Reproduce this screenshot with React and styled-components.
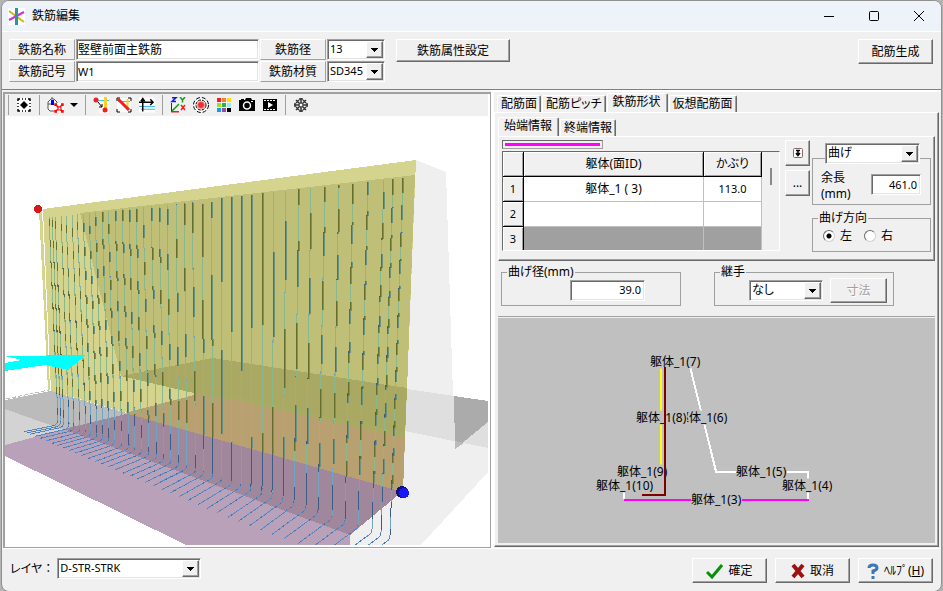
import React, { useState } from 'react';
import styled, { createGlobalStyle, css } from 'styled-components';

const GlobalStyle = createGlobalStyle`
  * {
    box-sizing: border-box;
  }

  body {
    margin: 0;
    background: #b4b4b4;
  }

  body, button, input, select {
    font-family: "Noto Sans", "Noto Sans CJK JP", sans-serif;
    font-feature-settings: "palt";
    font-size: 12px;
    line-height: 16px;
    color: #000;
  }
`;

/* bevels */

const raised = css`
  border: 1px solid;
  border-color: #fff #696969 #696969 #fff;
  box-shadow: inset -1px -1px #a0a0a0;
`;

const sunken = css`
  border: 1px solid;
  border-color: #a0a0a0 #fff #fff #a0a0a0;
  box-shadow: inset 1px 1px #696969, inset -1px -1px #e3e3e3;
`;

/* window frame */

const Window = styled.div`
  display: flex;
  flex-direction: column;
  min-height: calc(100vh - 1px);
  margin: 0 1px 1px;
  background: #f0f0f0;
  border: 1px solid #909090;
  border-radius: 8px;
  overflow: hidden;
`;

const TitleBar = styled.header`
  display: flex;
  align-items: center;
  height: 31px;
  padding-left: 6px;
  background: #eef3f9;
  border-bottom: 1px solid #fff;
`;

const Title = styled.h1`
  flex: 1;
  margin: 0 0 0 7px;
  font-size: 12px;
  font-weight: 400;
`;

const CaptionButton = styled.button`
  display: flex;
  align-items: center;
  justify-content: center;
  width: 45px;
  height: 30px;
  padding: 0;
  border: 0;
  background: none;
`;

const Header = styled.div`
  display: flex;
  align-items: flex-start;
  padding: 7px 8px 7px 7px;
  border-bottom: 1px solid #808080;
`;

const Fields = styled.div`
  display: grid;
  grid-template-columns: 66px 183px 66px 58px;
  grid-auto-rows: 21px;
  gap: 1px;
`;

const FieldLabel = styled.label`
  display: flex;
  align-items: center;
  justify-content: center;
  border: 1px solid;
  border-color: #fff #a0a0a0 #a0a0a0 #fff;
`;

const TextBox = styled.input`
  width: ${props => props.$width || '100%'};
  height: 21px;
  min-width: 0;
  padding: 0 3px 1px 1px;
  background: #fff;
  font-size: ${props => props.$latin ? '11px' : '12px'};
  text-align: ${props => props.$align || 'left'};
  outline: none;
  ${sunken}
`;

const SelectFrame = styled.span`
  display: inline-grid;
  width: ${props => props.$width || '100%'};
  height: 21px;
  vertical-align: top;
`;

const NativeSelect = styled.select`
  grid-area: 1 / 1;
  width: 100%;
  min-width: 0;
  padding: 0 18px 1px 2px;
  appearance: none;
  background: #fff;
  border-radius: 0;
  font-size: ${props => props.$latin ? '11px' : '12px'};
  outline: none;
  ${sunken}
`;

const SelectArrow = styled.span`
  display: flex;
  align-items: center;
  justify-content: center;
  grid-area: 1 / 1;
  justify-self: end;
  width: 17px;
  margin: 2px;
  background: #f0f0f0;
  pointer-events: none;
  ${raised}
`;

const Button = styled.button`
  display: flex;
  align-items: center;
  justify-content: center;
  gap: 5px;
  width: ${props => props.$width || '75px'};
  height: ${props => props.$height || '25px'};
  padding: 0;
  background: #f0f0f0;
  white-space: nowrap;
  ${raised}

  &:disabled {
    color: #a0a0a0;
    text-shadow: 1px 1px #fff;
  }
`;

const AttributeButton = styled(Button)`
  margin: 0 auto 0 11px;
`;

const Body = styled.main`
  display: flex;
  flex: 1;
`;

/* 3D view */

const ViewPane = styled.section`
  display: flex;
  flex: 1;
  flex-direction: column;
  min-width: 0;
  margin: 2px 0 0 1px;
  padding: 0 2px 2px 0;
  background: #fff;
  border: solid #a0a0a0;
  border-width: 2px 1px 1px 2px;
`;

const Toolbar = styled.div`
  display: flex;
  align-items: center;
  gap: 7px;
  height: 22px;
  padding-left: 3px;
  background: #f0f0f0;
`;

const Separator = styled.span`
  width: 1px;
  height: 20px;
  background: #a0a0a0;
`;

const ToolButton = styled.button`
  display: flex;
  align-items: center;
  width: ${props => props.$width || '16px'};
  height: 18px;
  padding: 0;
  border: 0;
  background: none;
`;

const Scene = styled.svg`
  display: block;
  flex: 1;
  width: 100%;
  min-height: 0;
`;

/* right side */

const SettingsPane = styled.section`
  display: flex;
  flex-direction: column;
  width: 450px;
  padding: 1px 2px 1px 0;
  border: solid #fff;
  border-width: 2px 0 0 3px;
`;

const Tabs = styled.div`
  display: flex;
  align-items: flex-end;
  height: 19px;
  padding-left: ${props => props.$inset || '0'};
`;

const Tab = styled.button`
  height: ${props => props.$active ? '20px' : '17px'};
  margin-right: 1px;
  margin-bottom: ${props => props.$active ? '-1px' : '0'};
  padding: ${props => props.$active ? '0 6px 3px 5px' : '0 3px'};
  background: #f0f0f0;
  border: 1px solid;
  border-color: #fff #696969 transparent #fff;
  border-bottom: 0;
  border-radius: 2px 2px 0 0;
  box-shadow: inset -1px 0 #a0a0a0;
  line-height: 16px;
  white-space: nowrap;
`;

const TabPanel = styled.div`
  display: flex;
  flex: 1;
  flex-direction: column;
  padding: 4px 3px 3px;
  ${raised}
`;

const EdgePanel = styled.div`
  display: flex;
  align-items: flex-start;
  padding: 3px 3px 8px;
  ${raised}
`;

const FaceColumn = styled.div`
  flex: 1;
  min-width: 0;
`;

const ColorBar = styled.div`
  width: 101px;
  height: 9px;
  margin-bottom: 2px;
  padding: 2px;
  border: 1px solid;
  border-color: #696969 #a0a0a0 #a0a0a0 #696969;

  &::after {
    content: '';
    display: block;
    height: 3px;
    background: #ff00ff;
  }
`;

const GridFrame = styled.div`
  display: flex;
  height: 100px;
  overflow: hidden;
  border: 1px solid;
  border-color: #696969 #fff #fff #696969;
`;

const FaceTable = styled.table`
  flex: 1;
  height: 99px;
  border-collapse: separate;
  border-spacing: 0;
  table-layout: fixed;
  background: #fff;

  th, td {
    height: 25px;
    padding: 0;
    font-weight: 400;
    text-align: center;
    border-right: 1px solid #c0c0c0;
    border-bottom: 1px solid #c0c0c0;
  }

  th {
    background: #f0f0f0;
    border-color: #000;
    box-shadow: inset 1px 1px #fff, inset -1px -1px #a0a0a0;
  }

  tbody th {
    font-size: 11px;
  }
`;

const Cell = styled.td`
  background: ${props => props.$unused ? '#a0a0a0' : '#fff'};
  font-size: ${props => props.$latin ? '11px' : '12px'};
`;

const ScrollTrack = styled.div`
  width: 17px;
  padding: 16px 0 0 8px;

  &::before {
    content: '';
    display: block;
    width: 2px;
    height: 17px;
    background: #8a8a8a;
  }
`;

const SideButtons = styled.div`
  display: flex;
  flex-direction: column;
  gap: 4px;
  margin: 0 2px 0 5px;
`;

const Groups = styled.div`
  width: 119px;
  padding-top: 3px;
`;

const Group = styled.fieldset`
  min-width: 0;
  width: ${props => props.$width || '100%'};
  margin: 0;
  padding: 0;
  border: 1px solid #a0a0a0;
`;

const Legend = styled.legend`
  margin-left: 5px;
  padding: 0 1px;
  line-height: 12px;
`;

const SelectLegend = styled.legend`
  margin-left: 12px;
  padding: 0 0 10px;
`;

const LengthRow = styled.div`
  display: flex;
  align-items: flex-start;
  justify-content: space-between;
  height: 30px;
  padding: 0 9px 0 8px;
`;

const LengthLabel = styled.label`
  display: flex;
  flex-direction: column;
  align-items: flex-start;
  margin-top: -4px;
`;

const DirectionGroup = styled(Group)`
  margin-top: 7px;
`;

const RadioRow = styled.div`
  display: flex;
  align-items: center;
  gap: 12px;
  height: 27px;
  padding: 0 0 3px 10px;
`;

const RadioLabel = styled.label`
  display: flex;
  align-items: center;
  gap: 5px;
`;

const Radio = styled.input`
  width: 12px;
  height: 12px;
  margin: 0;
  appearance: none;
  background: #fff;
  border: 1px solid;
  border-color: #696969 #d0d0d0 #d0d0d0 #696969;
  border-radius: 50%;

  &:checked {
    background: radial-gradient(circle, #000 2px, #fff 3px);
  }
`;

const BendRow = styled.div`
  display: flex;
  justify-content: flex-start;
  gap: 33px;
  padding: 5px 3px 10px;
  border-bottom: 1px solid #a0a0a0;
`;

const BendControls = styled.div`
  display: flex;
  align-items: center;
  justify-content: ${props => props.$spread ? 'space-between' : 'flex-end'};
  height: 27px;
  padding: ${props => props.$spread ? '0 6px 2px 34px' : '0 35px 3px 0'};
`;

const Diagram = styled.svg`
  display: block;
  flex: 1;
  width: 100%;
  min-height: 0;
  margin-top: 1px;
  background: #c0c0c0;
`;

/* bottom */

const Footer = styled.footer`
  display: flex;
  align-items: flex-start;
  gap: 8px;
  padding: 9px 8px 8px;
  border-top: 1px solid #fff;
`;

const LayerLabel = styled.label`
  display: flex;
  align-items: center;
  gap: 3px;
  margin-right: auto;
  white-space: pre;
`;

const Select = ({ id, label, options, width, latin }) => (
    <SelectFrame $width={width}>
        <NativeSelect id={id} aria-label={label} $latin={latin}>
            {options.map(option => <option key={option}>{option}</option>)}
        </NativeSelect>
        <SelectArrow>
            <svg width="7" height="4" shapeRendering="crispEdges"><path d="M0 0h7L3.5 4z" /></svg>
        </SelectArrow>
    </SelectFrame>
);

/* icons */

const Icon = ({ children, width = 16 }) => (
    <svg width={width} height="16" viewBox={`0 0 ${width} 16`} fill="none" stroke="#000" aria-hidden="true">{children}</svg>
);

const AppIcon = () => (
    <svg width="17" height="17" viewBox="0 0 17 17" strokeWidth="2" aria-hidden="true">
        <path fill="#fff" d="M0 0h17v17H0z" />
        <path stroke="#c8b820" d="M1 3l15 11" />
        <path stroke="#d030d8" d="M1 12L16 4" />
        <path stroke="#289898" strokeWidth="3" d="M8.500 0v17" />
    </svg>
);

const FitIcon = () => (
    <Icon>
        <path fill="#fff" stroke="none" d="M1 1h14v14H1z" />
        <path strokeWidth="1.500" d="M2 4V2h2M6 2h1M9 2h1M12 2h2v2M14 6v1M14 9v1M14 12v2h-2M10 14H9M7 14H6M4 14H2v-2M2 10V9M2 7V6" />
        <circle cx="8" cy="8" r="2.500" fill="#000" />
        <path d="M8 4v8M4 8h8" />
    </Icon>
);

const MouseIcon = () => (
    <Icon width={17}>
        <path fill="#fff" stroke="#555" d="M1 5l3-3h3l3 3v7l-2 2H3l-2-2z" />
        <path stroke="#555" d="M1 7h9M5 2V0" />
        <path stroke="#0000ff" strokeWidth="3" d="M5.500 3v5" />
        <path fill="#fff" stroke="none" d="M7 6h10v10H7z" />
        <path stroke="#f00" strokeWidth="1.500" d="M8 9V7h2M14 7h2v2M16 13v2h-2M10 15H8v-2M9 8l6 6M15 8l-6 6" />
        <path fill="#fff" stroke="#f00" d="M11 10h3v3h-3z" />
    </Icon>
);

const MoveEdgeIcon = () => (
    <Icon>
        <path fill="#fff" stroke="none" d="M6 0h10v16H6z" />
        <path stroke="#28c8f0" d="M4 3.500h12" />
        <path stroke="#ffd020" strokeWidth="3" d="M12.500 0v13" />
        <path d="M5 5l4 5M9 7v3H6" />
        <circle cx="3" cy="3" r="2.500" fill="#f02020" stroke="none" />
        <circle cx="12" cy="13" r="2.500" fill="#f02020" stroke="none" />
    </Icon>
);

const CutEdgeIcon = () => (
    <Icon>
        <path fill="#fff" stroke="none" d="M1 1h14v14H1z" />
        <path d="M1 4V1h3M12 1h3v3M15 12v3h-3M4 15H1v-3" />
        <path stroke="#28c8f0" d="M2 4.500h12" />
        <path stroke="#ffd020" strokeWidth="2" d="M11.500 2v11" />
        <path stroke="#f02020" strokeWidth="3" d="M2 2l11 11" />
    </Icon>
);

const AxisRangeIcon = () => (
    <Icon width={17}>
        <path fill="#fff" stroke="none" d="M0 0h17v16H0z" />
        <path stroke="#28b0e8" d="M0 9.500h17M2 12.500h15" />
        <path strokeWidth="1.500" d="M4 15V2M2 4l2-3 2 3M0 5h15M12 2l3 3-3 3" />
    </Icon>
);

const AxesIcon = () => (
    <Icon>
        <path stroke="#1818e0" strokeWidth="1.500" d="M2 .700h4L2 4.500h4" />
        <path stroke="#10a010" strokeWidth="1.500" d="M10 0l2.500 3M15 0l-2.500 3v2.500M2 14l7-7" />
        <path stroke="#1818e0" d="M1.500 6v9" />
        <path stroke="#f02020" strokeWidth="1.500" d="M11 8l4 5M15 8l-4 5M1 14.800h8" />
    </Icon>
);

const TargetIcon = () => (
    <Icon>
        <circle cx="8" cy="8" r="7.500" fill="#fff" strokeDasharray="4 2" />
        <circle cx="8" cy="8" r="5" strokeDasharray="3 1" />
        <circle cx="8" cy="8" r="3.500" fill="#f03030" stroke="#ff9090" />
    </Icon>
);

const PALETTE = ['#f02028', '#f88020', '#ffe000', '#a8e020', '#20b850', '#a0e8f0', '#10a0e8', '#a048a8', '#000'];

const PaletteIcon = () => (
    <Icon>
        {PALETTE.map((color, i) => (
            <rect key={color} x={1 + (i % 3) * 5} y={1 + Math.floor(i / 3) * 5} width="4" height="4" fill={color} stroke="none" />
        ))}
    </Icon>
);

const CameraIcon = () => (
    <Icon>
        <path fill="#000" stroke="none" d="M0 3h2V2h3v1h1l1-2h5l1 2h3v11H0z" />
        <circle cx="8" cy="8.500" r="3.500" stroke="#fff" strokeWidth="1.500" />
        <path stroke="#fff" d="M12 4.500h2" />
    </Icon>
);

const MovieIcon = () => (
    <Icon>
        <path fill="#000" stroke="none" d="M1 2h14v12H1z" />
        <path stroke="#fff" strokeDasharray="2 1" d="M2 3.500h12M2 12.500h12" />
        <path fill="#fff" stroke="none" d="M6 5l5 3-5 3z" />
    </Icon>
);

const SnowIcon = () => (
    <Icon>
        <path stroke="#333" strokeWidth="1.500" d="M8 1v14M1 8h14M3 3l10 10M13 3L3 13M6 2h4M6 14h4M2 6v4M14 6v4M3 6l3-3M10 3l3 3M3 10l3 3M10 13l3-3" />
        <circle cx="8" cy="8" r="2" fill="#fff" stroke="#333" />
    </Icon>
);

/* reinforcing bars: x at the top, x at the bend, dash period, first dash */

const BARS = [
    [49, 58, 21, 2], [52, 61, 21, 3], [55, 64, 21, 5], [61, 69, 22, 8], [66, 74, 22, 10], [72, 80, 23, 14],
    [77, 86, 23, 8], [83, 91, 24, 10], [89, 97, 25, 13], [95, 103, 26, 5], [102, 109, 27, 1], [108, 115, 28, 14],
    [115, 122, 30, 1], [122, 129, 32, 1], [129, 135, 34, 2], [136, 142, 36, 2], [143, 149, 37, 18], [151, 157, 39, 2],
    [159, 164, 41, 3], [167, 171, 45, 5], [176, 179, 54, 36], [184, 187, 66, 0], [192, 196, 84, 2], [202, 204, 96, 4],
    [211, 213, 128, 76], [221, 222, 152, 0], [231, 232, 245, 0], [241, 241, 500, 400], [252, 251, 242, 0],
    [263, 262, 240, 0], [274, 272, 155, 60], [286, 283, 108, 30], [299, 294, 82, -30], [311, 306, 65, 25],
    [325, 318, 54, -14], [339, 332, 46, -22], [353, 345, 40, -2], [368, 358, 35, -6], [384, 372, 31, 12],
    [393, 381, 28, 0], [403, 390, 27, 0],
].map(([top, bend, period, shift]) => {
    const y1 = 217 - (top - 49) * 0.11;
    const y2 = 424 + (bend - 59) * 0.35;
    const edge = 391 + (bend - 51) * 0.287;
    const edgeX = top + (bend - top) * (edge - y1) / (y2 - y1);
    const drop = 8 + Math.min(16, (bend - 58) * 0.07);
    const on = period * (top > 200 ? 0.55 : 0.35);
    return {
        top,
        full: `M${top} ${y1}L${bend} ${y2 - 4}Q${bend} ${y2} ${bend - 4} ${y2 + 2}L${bend - 34} ${y2 + drop}`,
        wall: `M${top} ${y1}L${edgeX} ${edge}`,
        straight: `M${top} ${y1}L${bend} ${y2 - 4}`,
        dash: `${on} ${period - on}`,
        offset: -shift,
    };
});

const WallView = () => (
    <Scene viewBox="5 116 483 429" preserveAspectRatio="xMidYMid meet" shapeRendering="crispEdges" role="img" aria-label="3D">
        <path fill="#efefef" d="M416 160L446 172L453 396L488 401V472L421 545H350V535L400 494Z" />
        <path fill="#fff" d="M446 172L453 396L488 401V160Z" />
        <path fill="#dfdfdf" d="M407 389L488 401V448L405 431Z" />
        <path fill="#ababab" d="M454 396L488 401V422L455 449Z" />
        <path fill="#bbb" d="M455 441L464 443L455 449Z" />
        <path fill="#bbb" d="M5 400L51 391L130 414L64 430L5 409Z" />
        <path fill="#d3d3d3" d="M5 409L64 430L5 445Z" />
        <path stroke="#bbb" strokeDasharray="4 2" d="M6 399L49 390" />
        <path fill="#b9a2b9" d="M5 445L64 429L350 535V545H186L5 456Z" />
        <path fill="#a0879c" d="M64 429L130 413L403 491L350 535Z" />

        <path fill="#d4d48e" d="M39 210H42L50 390H48Z" />
        <path fill="#d4d48e" d="M43 209L416 160L403 492L51 391Z" />
        <path fill="#bfbf78" d="M80 213L415 175L407 390L213 358L121 376Z" />
        <path fill="#a9a963" d="M121 376L213 358L407 388L405 438L198 394Z" />
        <path fill="#a9ab62" d="M198 393L240 397L405 433V438L240 402Z" />
        <path fill="#b8a070" d="M125 413L198 394L240 401L405 438L403 492Z" />

        <g fill="none">
            {BARS.map(bar => (
                <g key={bar.top}>
                    <path stroke="#5c90cc" d={bar.full} />
                    <path stroke="#4874a8" strokeDasharray="2 4" d={bar.full} />
                    <path stroke="#70a4c0" d={bar.straight} />
                    <path stroke="#88b88c" d={bar.wall} />
                    <path stroke="#3c5c84" strokeDasharray={bar.dash} strokeDashoffset={bar.offset} d={bar.straight} />
                    <path stroke="#646f30" strokeDasharray={bar.dash} strokeDashoffset={bar.offset} d={bar.wall} />
                    {bar.top > 80 && (
                        <path stroke="#6a9480" strokeDasharray={bar.dash} strokeDashoffset={bar.offset} transform="translate(1 0)" d={bar.wall} />
                    )}
                </g>
            ))}
        </g>

        <path fill="#0ff" d="M5 356L86 355L68 370L45 365L5 371V363L22 360Z" />
        <circle cx="39" cy="209" r="3" fill="#701010" />
        <circle cx="38" cy="209" r="4" fill="#d81818" />
        <circle cx="402" cy="492" r="6" fill="#10107c" />
        <circle cx="404" cy="493" r="5" fill="#1818f8" />
    </Scene>
);

const FACES = [
    { id: 7, x: 651, y: 361 },
    { id: 6, x: 678, y: 417 },
    { id: 8, x: 637, y: 417 },
    { id: 5, x: 737, y: 471 },
    { id: 4, x: 783, y: 485 },
    { id: 3, x: 692, y: 499 },
    { id: 9, x: 618, y: 471 },
    { id: 10, x: 597, y: 485 },
];

const SectionView = () => (
    <Diagram viewBox="499 318 437 224">
        <g fill="none" strokeWidth="2" shapeRendering="crispEdges">
            <path stroke="#fff" d="M691 366L717 471H809V498M625 471V498" />
            <path stroke="#ff0" d="M662 366V464" />
            <path stroke="#f0f" d="M625 499H810" />
        </g>
        {FACES.map(face => (
            <g key={face.id}>
                <rect x={face.x} y={face.y - 7} width={face.id > 9 ? 57 : 51} height="14" fill="#c0c0c0" />
                <text x={face.x} y={face.y + 4} fontSize="12">躯体_1({face.id})</text>
            </g>
        ))}
        <path fill="none" stroke="#800000" strokeWidth="2" shapeRendering="crispEdges" d="M666 366V494H643" />
    </Diagram>
);

const MAIN_TABS = ['配筋面', '配筋ピッチ', '鉄筋形状', '仮想配筋面'];
const EDGE_TABS = ['始端情報', '終端情報'];

const TabList = ({ items, active, onSelect, inset }) => (
    <Tabs role="tablist" $inset={inset}>
        {items.map(item => (
            <Tab key={item} type="button" role="tab" aria-selected={item === active} $active={item === active} onClick={() => onSelect(item)}>
                {item}
            </Tab>
        ))}
    </Tabs>
);

const App = () => {
    const [mainTab, setMainTab] = useState('鉄筋形状');
    const [edgeTab, setEdgeTab] = useState('始端情報');

    return (
        <>
            <GlobalStyle />
            <Window>
                <TitleBar>
                    <AppIcon />
                    <Title>鉄筋編集</Title>
                    <CaptionButton type="button" aria-label="最小化">
                        <svg width="10" height="10" stroke="#000"><path d="M0 5.500h10" /></svg>
                    </CaptionButton>
                    <CaptionButton type="button" aria-label="最大化">
                        <svg width="10" height="10" stroke="#000" fill="none"><rect x=".5" y=".5" width="9" height="9" rx="1" /></svg>
                    </CaptionButton>
                    <CaptionButton type="button" aria-label="閉じる">
                        <svg width="10" height="10" stroke="#000"><path d="M0 0l10 10M10 0L0 10" /></svg>
                    </CaptionButton>
                </TitleBar>

                <Header>
                    <Fields>
                        <FieldLabel htmlFor="name">鉄筋名称</FieldLabel>
                        <TextBox id="name" defaultValue="竪壁前面主鉄筋" />
                        <FieldLabel htmlFor="diameter">鉄筋径</FieldLabel>
                        <Select id="diameter" options={['13']} latin />
                        <FieldLabel htmlFor="mark">鉄筋記号</FieldLabel>
                        <TextBox id="mark" defaultValue="W1" $latin />
                        <FieldLabel htmlFor="material">鉄筋材質</FieldLabel>
                        <Select id="material" options={['SD345']} latin />
                    </Fields>
                    <AttributeButton type="button" $width="114px" $height="23px">鉄筋属性設定</AttributeButton>
                    <Button type="button">配筋生成</Button>
                </Header>

                <Body>
                    <ViewPane>
                        <Toolbar>
                            <Separator />
                            <ToolButton type="button" aria-label="全体表示"><FitIcon /></ToolButton>
                            <Separator />
                            <ToolButton type="button" aria-label="マウス操作" $width="31px">
                                <MouseIcon />
                                <svg width="14" height="5"><path d="M6 0h8L10 4z" /></svg>
                            </ToolButton>
                            <Separator />
                            <ToolButton type="button" aria-label="端点移動"><MoveEdgeIcon /></ToolButton>
                            <ToolButton type="button" aria-label="切断"><CutEdgeIcon /></ToolButton>
                            <ToolButton type="button" aria-label="範囲"><AxisRangeIcon /></ToolButton>
                            <Separator />
                            <ToolButton type="button" aria-label="座標軸"><AxesIcon /></ToolButton>
                            <ToolButton type="button" aria-label="中心"><TargetIcon /></ToolButton>
                            <ToolButton type="button" aria-label="配色"><PaletteIcon /></ToolButton>
                            <ToolButton type="button" aria-label="撮影"><CameraIcon /></ToolButton>
                            <ToolButton type="button" aria-label="動画"><MovieIcon /></ToolButton>
                            <Separator />
                            <ToolButton type="button" aria-label="固定"><SnowIcon /></ToolButton>
                        </Toolbar>
                        <WallView />
                    </ViewPane>

                    <SettingsPane>
                        <TabList items={MAIN_TABS} active={mainTab} onSelect={setMainTab} inset="3px" />
                        <TabPanel>
                            <TabList items={EDGE_TABS} active={edgeTab} onSelect={setEdgeTab} />
                            <EdgePanel>
                                <FaceColumn>
                                    <ColorBar />
                                    <GridFrame>
                                        <FaceTable>
                                            <colgroup>
                                                <col width="21" />
                                                <col />
                                                <col width="58" />
                                            </colgroup>
                                            <thead>
                                                <tr>
                                                    <th aria-label="番号" />
                                                    <th>躯体(面ID)</th>
                                                    <th>かぶり</th>
                                                </tr>
                                            </thead>
                                            <tbody>
                                                <tr><th>1</th><Cell>躯体_1 ( 3)</Cell><Cell $latin>113.0</Cell></tr>
                                                <tr><th>2</th><Cell /><Cell /></tr>
                                                <tr><th>3</th><Cell $unused /><Cell $unused /></tr>
                                            </tbody>
                                        </FaceTable>
                                        <ScrollTrack />
                                    </GridFrame>
                                </FaceColumn>
                                <SideButtons>
                                    <Button type="button" $width="25px" $height="26px" aria-label="展開">
                                        <svg width="12" height="12" fill="none" stroke="#000">
                                            <rect x="1.500" y="1.500" width="9" height="9" rx="1" fill="#fff" stroke="#886868" />
                                            <path d="M4 3.500h4M6 4v4M4 6l2 2.500L8 6" strokeWidth="1.500" />
                                        </svg>
                                    </Button>
                                    <Button type="button" $width="25px" $height="26px">...</Button>
                                </SideButtons>
                                <Groups>
                                    <Group>
                                        <SelectLegend><Select label="端部形状" options={['曲げ']} width="95px" /></SelectLegend>
                                        <LengthRow>
                                            <LengthLabel htmlFor="extra"><span>余長</span><span>(mm)</span></LengthLabel>
                                            <TextBox id="extra" defaultValue="461.0" $width="50px" $align="right" $latin />
                                        </LengthRow>
                                    </Group>
                                    <DirectionGroup>
                                        <Legend>曲げ方向</Legend>
                                        <RadioRow>
                                            <RadioLabel><Radio type="radio" name="direction" defaultChecked />左</RadioLabel>
                                            <RadioLabel><Radio type="radio" name="direction" />右</RadioLabel>
                                        </RadioRow>
                                    </DirectionGroup>
                                </Groups>
                            </EdgePanel>

                            <BendRow>
                                <Group $width="180px">
                                    <Legend>曲げ径(mm)</Legend>
                                    <BendControls>
                                        <TextBox aria-label="曲げ径(mm)" defaultValue="39.0" $width="75px" $align="right" $latin />
                                    </BendControls>
                                </Group>
                                <Group $width="180px">
                                    <Legend>継手</Legend>
                                    <BendControls $spread>
                                        <Select label="継手" options={['なし']} width="74px" />
                                        <Button type="button" $width="57px" disabled>寸法</Button>
                                    </BendControls>
                                </Group>
                            </BendRow>

                            <SectionView />
                        </TabPanel>
                    </SettingsPane>
                </Body>

                <Footer>
                    <LayerLabel>
                        <span>レイヤ ： </span>
                        <Select options={['D-STR-STRK']} width="144px" latin />
                    </LayerLabel>
                    <Button type="button">
                        <svg width="17" height="16" fill="none" stroke="#089008" strokeWidth="3"><path d="M1 9l5 5L16 2" /></svg>
                        確定
                    </Button>
                    <Button type="button">
                        <svg width="14" height="16" fill="none" stroke="#a01010" strokeWidth="4"><path d="M2 2l10 12M12 2L2 14" /></svg>
                        取消
                    </Button>
                    <Button type="button">
                        <svg width="12" height="16" fill="none" stroke="#3c78b8" strokeWidth="3"><path d="M2 5Q2 2 6 2T10 5Q10 7 6 8V11M6 13v3" /></svg>
                        <span>ﾍﾙﾌﾟ(<u>H</u>)</span>
                    </Button>
                </Footer>
            </Window>
        </>
    );
};

export default App;
